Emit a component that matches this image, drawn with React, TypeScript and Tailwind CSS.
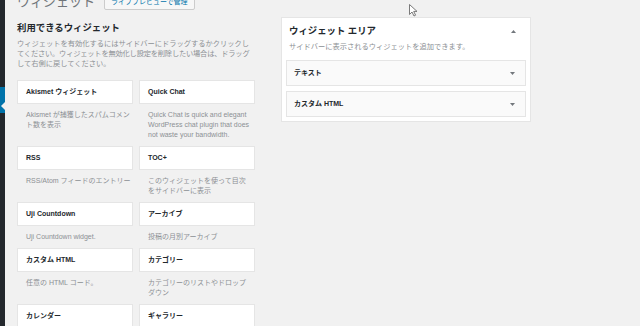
import React from "react";

type Widget = { title: string; desc: string[] };

const widgets: Widget[] = [
  { title: "Akismet ウィジェット", desc: ["Akismet が捕獲したスパムコメン", "ト数を表示"] },
  {
    title: "Quick Chat",
    desc: ["Quick Chat is quick and elegant", "WordPress chat plugin that does", "not waste your bandwidth."],
  },
  { title: "RSS", desc: ["RSS/Atom フィードのエントリー"] },
  { title: "TOC+", desc: ["このウィジェットを使って目次", "をサイドバーに表示"] },
  { title: "Uji Countdown", desc: ["Uji Countdown widget."] },
  { title: "アーカイブ", desc: ["投稿の月別アーカイブ"] },
  { title: "カスタム HTML", desc: ["任意の HTML コード。"] },
  { title: "カテゴリー", desc: ["カテゴリーのリストやドロップ", "ダウン"] },
  { title: "カレンダー", desc: [] },
  { title: "ギャラリー", desc: [] },
];

const areaWidgets = ["テキスト", "カスタム HTML"];

function Arrow(props: { up?: boolean }) {
  return (
    <svg width="5" height="3" viewBox="0 0 5 3" className="shrink-0">
      <path d={props.up ? "M0 3 L2.5 0 L5 3 Z" : "M0 0 L5 0 L2.5 3 Z"} fill="#72777c" />
    </svg>
  );
}

function WidgetCard({ widget }: { widget: Widget }) {
  return (
    <div className="flex flex-col">
      <div className="flex h-[24px] items-center border border-[#e5e5e5] bg-white px-[8px] text-[7px] font-semibold whitespace-nowrap">
        {widget.title}
      </div>
      <div className="px-[9px] py-[6px] text-[7px] leading-[10px] text-[#8c9094]">
        {widget.desc.map((line) => (
          <div key={line} className="whitespace-nowrap">
            {line}
          </div>
        ))}
      </div>
    </div>
  );
}

export default function App() {
  return (
    <div className="relative flex h-[326px] w-[640px] overflow-hidden bg-[#f1f1f1] font-['Liberation_Sans','Noto_Sans_CJK_JP',sans-serif] text-[#23282d]">
      {/* admin menu edge */}
      <div className="w-[5px] shrink-0 bg-[#23282d] pt-[87px]">
        <div className="relative h-[26px] bg-[#0073aa]">
          <span className="absolute right-0 top-[15px] border-y-[4px] border-r-[4px] border-y-transparent border-r-[#f1f1f1]" />
        </div>
      </div>

      <div className="flex flex-col pl-[12px]">
        <div className="-mt-[6px] flex h-[16px] items-center gap-[9px]">
          <h1 className="text-[13px] leading-[16px] text-[#70757a]">ウィジェット</h1>
          <span className="flex h-[16px] items-center rounded-[2px] border border-[#cccccc] bg-[#f7f7f7] px-[6px] text-[7px] text-[#0073aa]">
            ライブプレビューで管理
          </span>
        </div>

        <div className="mt-[7px] flex gap-[26px]">
          <div className="flex w-[238px] flex-col">
            <h2 className="mt-[5px] text-[9.4px] leading-[12px] font-semibold">利用できるウィジェット</h2>
            <div className="mt-[5px] text-[7.25px] leading-[10px] text-[#8c9094]">
              <div className="whitespace-nowrap">ウィジェットを有効化するにはサイドバーにドラッグするかクリックし</div>
              <div className="whitespace-nowrap tracking-[-0.2px]">てください。ウィジェットを無効化し設定を削除したい場合は、ドラッグ</div>
              <div className="whitespace-nowrap">して右側に戻してください。</div>
            </div>
            <div className="mt-[11px] grid grid-cols-2 gap-x-[6px]">
              {widgets.map((w) => (
                <WidgetCard key={w.title} widget={w} />
              ))}
            </div>
          </div>

          <div className="w-[250px]">
            <div className="border border-[#e5e5e5] bg-white px-[4px] pb-[4px] pt-[7px]">
              <div className="flex h-[12px] items-center justify-between pl-[3px] pr-[10px]">
                <span className="text-[9.4px] leading-[12px] font-semibold">ウィジェット エリア</span>
                <Arrow up />
              </div>
              <div className="mt-[5px] pl-[3px] text-[7.25px] leading-[10px] text-[#8c9094]">
                サイドバーに表示されるウィジェットを追加できます。
              </div>
              <div className="mt-[8px] flex flex-col gap-[5px]">
                {areaWidgets.map((name) => (
                  <div
                    key={name}
                    className="flex h-[26px] items-center justify-between border border-[#e5e5e5] bg-[#fafafa] pl-[7px] pr-[10px] text-[7px] font-semibold"
                  >
                    <span>{name}</span>
                    <Arrow />
                  </div>
                ))}
              </div>
            </div>
          </div>
        </div>
      </div>

      {/* mouse cursor */}
      <svg className="absolute left-[409px] top-[4px]" width="10" height="13" viewBox="0 0 10 13">
        <path d="M0.5 0.5 L0.5 10.5 L3 8 L5 12 L6.6 11.2 L4.7 7.4 L8 7.4 Z" fill="#ffffff" stroke="#6b6b6b" strokeWidth="0.9" />
      </svg>
    </div>
  );
}
